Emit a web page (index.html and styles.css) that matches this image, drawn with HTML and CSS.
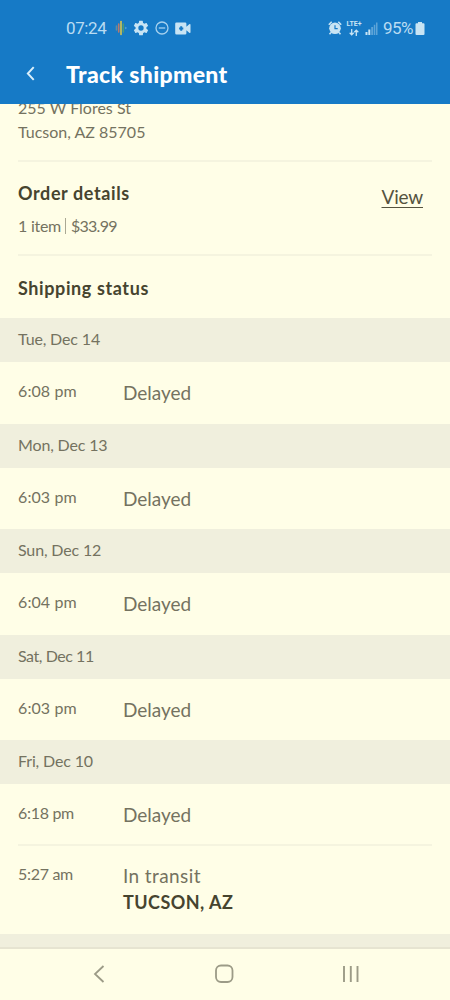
FILE: index.html
```html
<!DOCTYPE html>
<html lang="en">
<head>
    <meta charset="UTF-8">
    <meta name="viewport" content="width=device-width, initial-scale=1.0">
    <title>Track shipment</title>
    <link rel="stylesheet" href="styles.css">
</head>
<body>
<header class="header">
    <div class="status-bar">
        <span class="clock">07:24</span>
        <svg class="icon-voice" width="12" height="16" viewBox="0 0 12 16" fill="none" stroke-width="1.6" stroke-linecap="round">
            <path d="M1.5 6v4" stroke="#678b9c"/>
            <path d="M3.7 4v8" stroke="#b9796b"/>
            <path d="M6 1.5v13" stroke="#d9c64d"/>
            <path d="M8.3 4v8" stroke="#4b9a78"/>
            <path d="M10.7 7.5v1" stroke="#4b9ad6"/>
        </svg>
        <svg class="icon-gear" width="16" height="16" viewBox="1.5 1.5 21 21" fill="#c8e4f4">
            <path fill-rule="evenodd" d="M19.1 12.9a7 7 0 0 0 0-1.8l2-1.6a.5.5 0 0 0 .2-.6L19.3 5.6a.5.5 0 0 0-.6-.2l-2.4 1a7 7 0 0 0-1.6-1l-.4-2.500a.5.5 0 0 0-.5-.4h-3.800a.5.5 0 0 0-.5.4l-.4 2.500a7 7 0 0 0-1.600 1l-2.400-1a.5.5 0 0 0-.6.2L2.700 8.900a.5.5 0 0 0 .1.600l2.100 1.600a7 7 0 0 0 0 1.800l-2.100 1.600a.5.5 0 0 0-.1.600l1.900 3.300c.1.200.4.300.6.200l2.400-1a7 7 0 0 0 1.600 1l.4 2.500c0 .2.200.4.500.4h3.800c.2 0 .4-.2.500-.4l.4-2.500a7 7 0 0 0 1.600-1l2.400 1c.2.100.5 0 .6-.2l1.900-3.300a.5.5 0 0 0-.1-.6zM12 15.500a3.500 3.500 0 1 1 0-7 3.500 3.500 0 0 1 0 7z"/>
        </svg>
        <svg class="icon-dnd" width="14" height="14" viewBox="0 0 14 14" fill="none" stroke="#a6d1ee" stroke-width="1.3">
            <circle cx="7" cy="7" r="6"/>
            <path d="M3.8 7h6.4"/>
        </svg>
        <svg class="icon-camera" width="16" height="13" viewBox="0 0 16 13" fill="#c8e4f4">
            <path fill-rule="evenodd" d="M1.500.5h8.600q1.300 0 1.300 1.300v2.900l2.800-2.500q1.300-.6 1.300.6v7.400q0 1.200-1.300.6l-2.800-2.500v2.900q0 1.300-1.300 1.300H1.500Q.2 12.500.2 11.200V1.800Q.2.500 1.500.5zM5.200 4.300v1.200H4.100v2h1.100v1.200h2V7.500h1.100v-2H7.200V4.300z"/>
        </svg>
        <span class="spacer"></span>
        <svg class="icon-alarm" width="14" height="14" viewBox="0 0 14 14">
            <path d="M.8 3.700 3.700.8M13.200 3.700 10.300.8M3 11.500l-1.500 1.700M11 11.500l1.500 1.700" stroke="#c8e4f4" stroke-width="1.600" fill="none"/>
            <circle cx="7" cy="7.300" r="5.800" fill="#c8e4f4"/>
            <path d="M7 4.200v3.400h2.700" stroke="#167ac6" stroke-width="1.200" fill="none"/>
        </svg>
        <div class="lte">
            <span>LTE+</span>
            <svg width="10" height="7" viewBox="0 0 10 7" fill="none" stroke="#c8e4f4" stroke-width="1.3">
                <path d="M2.700 0v5.800M.7 3.700l2 2.200 2-2.200M7.300 7V1.200M5.300 3.300l2-2.200 2 2.200"/>
            </svg>
        </div>
        <svg class="icon-signal" width="13" height="13" viewBox="0 0 13 13">
            <path d="M.5 10h2v3h-2zM3.300 7.500h2V13h-2z" fill="#c8e4f4"/>
            <path d="M6.200 5h1.900v8H6.200zM8.800 2.700h1.500V13H8.800zM11 .5h1.500V13H11z" fill="#5da4d8"/>
        </svg>
        <span class="battery-text">95%</span>
        <svg class="icon-battery" width="10" height="13" viewBox="0 0 10 13" fill="#c8e4f4">
            <path d="M3 0h4v1.300h1.500q1 0 1 1V12q0 1-1 1h-7q-1 0-1-1V2.300q0-1 1-1H3z"/>
        </svg>
    </div>
    <div class="title-bar">
        <svg class="back" width="9" height="15" viewBox="0 0 8 14" fill="none" stroke="#d9effb" stroke-width="1.8">
            <path d="M7 1 1.500 7 7 13"/>
        </svg>
        <h1>Track shipment</h1>
    </div>
</header>

<main class="content">
    <div class="address section">
        <p class="street">255 W Flores St</p>
        <p class="city">Tucson, AZ 85705</p>
    </div>
    <div class="order section">
        <div>
            <h2 class="order-title">Order details</h2>
            <p class="order-info">1 item <i class="bar"></i> <span class="price">$33.99</span></p>
        </div>
        <a class="view">View</a>
    </div>
    <h2 class="shipping-title">Shipping status</h2>

    <div class="day">Tue, Dec 14</div>
    <div class="event"><span class="time">6:08 pm</span><span class="state">Delayed</span></div>
    <div class="day">Mon, Dec 13</div>
    <div class="event"><span class="time">6:03 pm</span><span class="state">Delayed</span></div>
    <div class="day">Sun, Dec 12</div>
    <div class="event"><span class="time">6:04 pm</span><span class="state">Delayed</span></div>
    <div class="day day-narrow">Sat, Dec 11</div>
    <div class="event"><span class="time">6:03 pm</span><span class="state">Delayed</span></div>
    <div class="day">Fri, Dec 10</div>
    <div class="event"><span class="time time-narrow">6:18 pm</span><span class="state">Delayed</span></div>
    <div class="event event-last">
        <span class="time time-narrow">5:27 am</span>
        <div>
            <div class="state transit">In transit</div>
            <div class="place">TUCSON, AZ</div>
        </div>
    </div>
    <div class="day"></div>
</main>

<nav class="nav">
    <svg width="12" height="18" viewBox="0 0 12 18" fill="none" stroke="#9c9b87" stroke-width="1.8">
        <path d="M10.500 1 2 9l8.500 8"/>
    </svg>
    <svg width="20" height="20" viewBox="0 0 20 20" fill="none" stroke="#9c9b87" stroke-width="1.8">
        <rect x="2" y="1.500" width="16.500" height="16.500" rx="5"/>
    </svg>
    <svg width="18" height="18" viewBox="0 0 18 18" fill="none" stroke="#9c9b87" stroke-width="1.9">
        <path d="M2 1v16M8.800 1v16M15.500 1v16"/>
    </svg>
</nav>
</body>
</html>
```
FILE: styles.css
```css
* {
    box-sizing: border-box;
}
body {
    margin: 0;
    height: 1000px;
    display: flex;
    flex-direction: column;
    overflow: hidden;
    background-color: #fffee7;
    color: #747260;
    font-family: Lato, sans-serif;
    font-size: 16px;
}
h1, h2, p {
    margin: 0;
}
svg {
    display: block;
    flex: none;
}

.header {
    height: 103.5px;
    flex: none;
    background-color: #167ac6;
    color: #fff;
}
.status-bar {
    height: 48px;
    padding: 8px 25px 0 66px;
    display: flex;
    align-items: center;
    font-family: Roboto, sans-serif;
    font-size: 17px;
    color: #b9dcf2;
}
.clock {
    width: 41px;
    letter-spacing: -0.4px;
}
.icon-voice {
    margin-left: 8px;
}
.icon-gear {
    margin-left: 6px;
}
.icon-dnd {
    margin-left: 6px;
}
.icon-camera {
    margin-left: 6px;
}
.spacer {
    flex: 1;
}
.lte {
    display: flex;
    flex-direction: column;
    align-items: center;
    width: 16px;
    margin-left: 4px;
    font-size: 7px;
    line-height: 7px;
    font-weight: bold;
    gap: 1px;
    color: #c8e4f4;
}
.icon-signal {
    margin-left: 3px;
}
.battery-text {
    margin-left: 5px;
    width: 32px;
    letter-spacing: -0.5px;
}
.title-bar {
    height: 51px;
    display: flex;
    align-items: center;
    padding-left: 26px;
}
.title-bar h1 {
    margin-left: 31px;
    font-size: 23px;
    font-weight: 900;
    letter-spacing: 0.35px;
}

.content {
    flex: 1;
    min-height: 0;
    overflow: hidden;
}
.section {
    margin: 0 18px;
    border-bottom: 2px solid #f5f4df;
}
.address {
    height: 58px;
}
.address p {
    position: relative;
    top: -8px;
    line-height: 24.5px;
}
.order {
    display: flex;
    justify-content: space-between;
    height: 94.5px;
    padding: 19px 9px 0 0;
}
.order-title, .shipping-title {
    font-size: 18px;
    line-height: 24px;
    font-weight: bold;
    letter-spacing: 0.6px;
    color: #46442f;
}
.order-info {
    margin-top: 10px;
    line-height: 22px;
    display: flex;
    align-items: center;
    letter-spacing: -0.25px;
}
.bar {
    width: 1px;
    height: 16px;
    margin: 0 5px 0 4px;
    background-color: #aaa893;
}
.price {
    letter-spacing: -0.75px;
}
.view {
    font-size: 19px;
    line-height: 24px;
    margin-top: 4px;
    height: 22px;
    letter-spacing: -0.2px;
    color: #55533f;
    text-decoration: underline;
    text-decoration-thickness: 1px;
    text-underline-offset: 3px;
}
.shipping-title {
    margin-left: 18px;
    height: 62px;
    padding-top: 20px;
}

.day {
    height: 44px;
    padding-left: 18px;
    line-height: 41px;
    letter-spacing: -0.15px;
    background-color: #f0efdd;
}
.day-narrow {
    letter-spacing: -0.45px;
}
.event {
    display: flex;
    height: 61.6px;
    padding: 19px 0 0 18px;
}
.time {
    width: 105px;
    line-height: 20px;
    letter-spacing: 0.1px;
}
.time-narrow {
    letter-spacing: -0.3px;
}
.state {
    font-size: 19px;
    line-height: 24px;
}
.transit {
    letter-spacing: 0.4px;
}
.event-last {
    height: 90px;
    margin: -1.5px 18px 0;
    padding: 18px 0 0;
    border-top: 2px solid #f5f4df;
}
.place {
    margin-top: 2px;
    font-size: 18px;
    line-height: 24px;
    font-weight: bold;
    letter-spacing: 0.45px;
    color: #46442f;
}

.nav {
    flex: none;
    height: 53px;
    border-top: 2px solid #e6e4d1;
    display: flex;
    align-items: center;
    justify-content: space-between;
    padding: 0 90px 1px 93px;
}
```
